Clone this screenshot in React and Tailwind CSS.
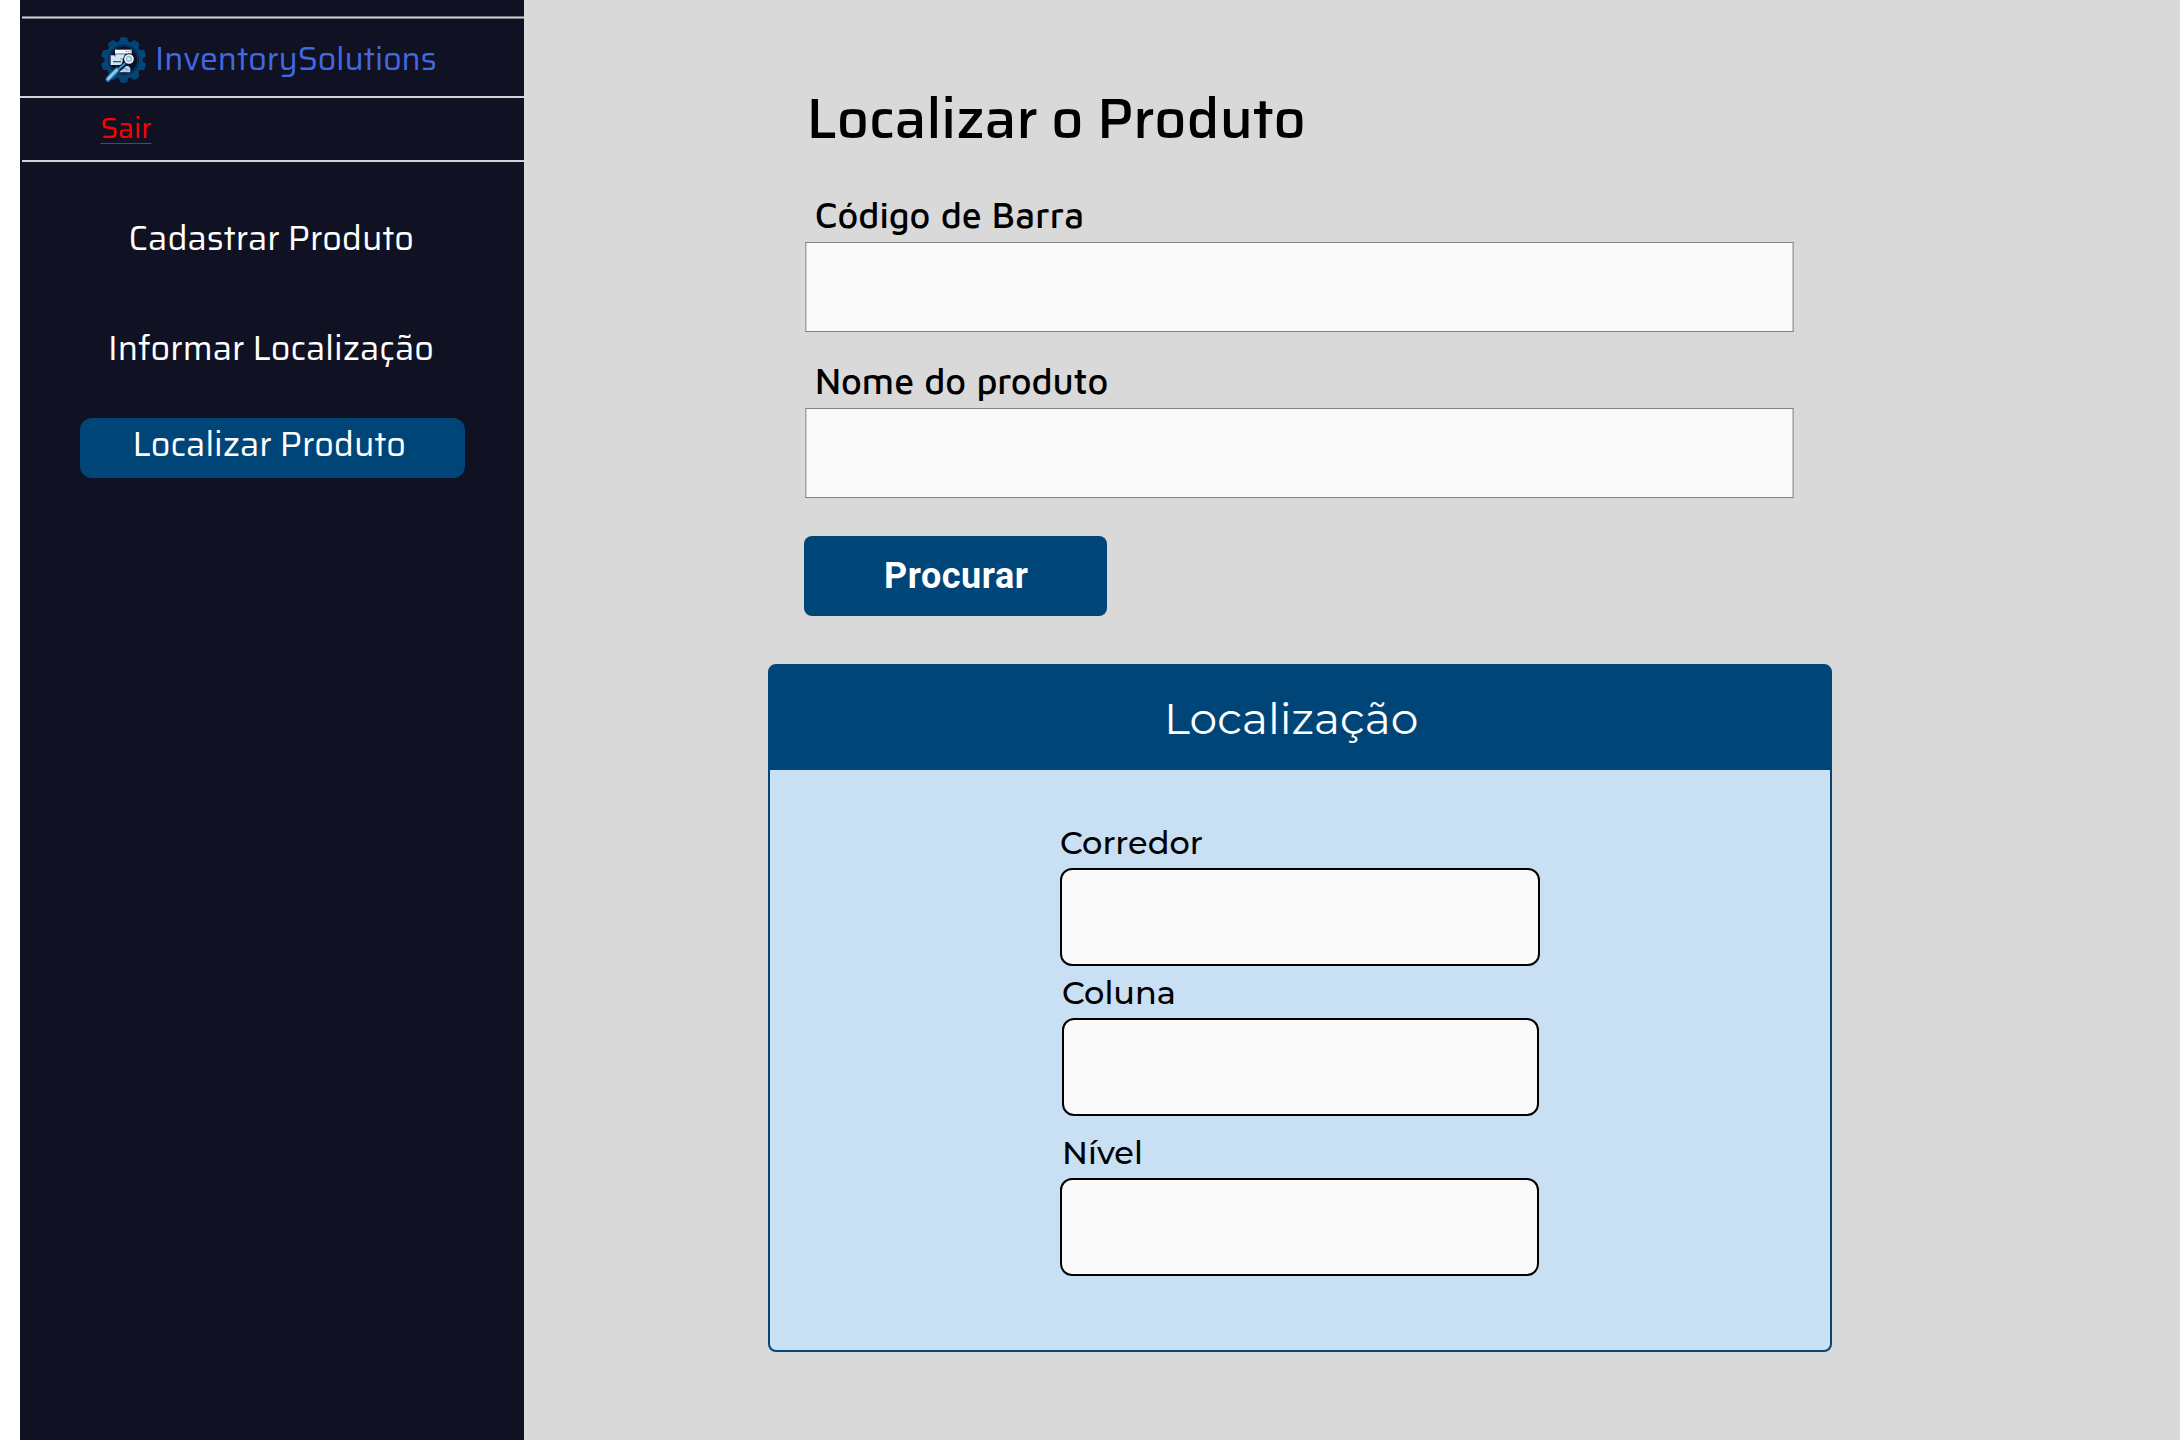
import React from "react";

const TEETH = [0, 36, 72, 108, 144, 180, 216, 252, 288, 324];

function Logo() {
  return (
    <svg viewBox="0 0 180 180" className="block h-[60px] w-[60px] shrink-0" aria-hidden="true">
      <g fill="#024678">
        {TEETH.map((a) => (
          <path key={a} d="M71 38 L75 26 Q76 22 80 22 H92 Q96 22 97 26 L101 38 Z" transform={`rotate(${a} 86 90)`} />
        ))}
        <circle cx="86" cy="90" r="57" />
      </g>
      <circle cx="86" cy="90" r="46" fill="#0b1128" />
      <circle cx="86" cy="90" r="43" fill="none" stroke="#0a4f86" strokeWidth="2.5" />
      <path d="M60 59 H110 V71 H60 Z" fill="#f4fbff" />
      <path d="M92 64 H107" stroke="#31597c" strokeWidth="2.5" strokeDasharray="3 3" />
      <path d="M61 73 H90 L86 86 H61 Z" fill="#d4e9f8" />
      <path d="M47 76 H58 L61 82 H76 V88 H84 L80 105 H47 Z" fill="#cfe6f7" />
      <path d="M54 95 H78" stroke="#2b4663" strokeWidth="3.5" />
      <path d="M84 108 H100 L106 114 V127 H72 Z" fill="#a9d3f1" />
      <path d="M78 120 L88 114 L98 120" stroke="#4c8cbd" strokeWidth="3" fill="none" />
      <path d="M92 100 L66 122" stroke="#0b1128" strokeWidth="14" />
      <path d="M91 99 L70 118" stroke="#3f8fca" strokeWidth="6" />
      <path d="M66 120 L39 148" stroke="#2b7ab5" strokeWidth="15" strokeLinecap="round" />
      <path d="M65 120 L39 147" stroke="#8fc8f0" strokeWidth="8" strokeLinecap="round" />
      <circle cx="102" cy="87" r="17" fill="#0b1128" />
      <circle cx="102" cy="87" r="12" fill="#8fbfe0" stroke="#eef8ff" strokeWidth="5" />
      <path d="M97 83 H106 V91 H97 Z" fill="#d9edf9" />
    </svg>
  );
}

function SearchField({ label }) {
  return (
    <label className="block">
      <span className="block h-[46px] pt-px pl-[10px] font-['Maven_Pro','Noto_Sans',sans-serif] text-4xl leading-[36px] font-medium">
        {label}
      </span>
      <input className="block h-[90px] w-[989px] border border-x-[#a4a4a4] border-y-[#848484] bg-[#fafafa] px-6 text-3xl shadow-[inset_1px_0_#d0d0d0,inset_-1px_0_#c4c4c4] outline-none" />
    </label>
  );
}

function LocationField({ label, labelClass, inputClass }) {
  return (
    <label className="block">
      <span className={`block h-[46px] pt-px text-[32px] leading-[40px] font-medium ${labelClass}`}>{label}</span>
      <input className={`block h-[98px] rounded-xl border-2 border-black bg-[#fafafa] px-6 text-3xl outline-none ${inputClass}`} />
    </label>
  );
}

function Sidebar() {
  return (
    <aside className="ml-5 flex w-[504px] shrink-0 flex-col bg-[#101122] pt-4 font-['Saira','Roboto',sans-serif] text-white">
      <div className="ml-0.5 h-[3px] border-y border-[#77777f] bg-[#d4d4d8]" />
      <div className="flex h-[77px] items-start pl-[75px]">
        <div className="mt-[11px]">
          <Logo />
        </div>
        <span className="mt-4 text-[32px] leading-[48px] whitespace-nowrap text-[#4169e1]">InventorySolutions</span>
      </div>
      <div className="h-0.5 bg-[#d4d4d8]" />
      <div className="h-[62px] pt-[10px] pl-[80.5px]">
        <a href="#" className="block w-fit text-[28px] leading-[40px] text-[#ff0000] underline decoration-1 underline-offset-[5px] [text-decoration-skip-ink:none]">
          Sair
        </a>
      </div>
      <div className="ml-0.5 h-0.5 bg-[#d4d4d8]" />
      <nav className="flex flex-col pt-14 text-[34px] leading-[40px] whitespace-nowrap">
        <a href="#" className="pl-[108.5px]">Cadastrar Produto</a>
        <a href="#" className="mt-[70px] pl-[88px]">Informar Localização</a>
        <a href="#" className="mt-[50px] ml-[60px] h-[60px] w-[385px] rounded-xl bg-[#004578] pt-[6px] pl-[52.5px]">Localizar Produto</a>
      </nav>
    </aside>
  );
}

export default function App() {
  return (
    <div className="flex h-[1440px] w-[2180px] overflow-hidden bg-white text-black">
      <Sidebar />
      <main className="flex-1 bg-[#d9d9d9] pt-[79px]">
        <section className="pl-[281px]">
          <h1 className="pl-[1.5px] font-['Saira','Roboto',sans-serif] text-[56px] leading-[79px] font-medium">Localizar o Produto</h1>
          <div className="mt-[38px] flex flex-col gap-[30px]">
            <SearchField label="Código de Barra" />
            <SearchField label="Nome do produto" />
          </div>
          <button className="mt-[38px] -ml-[1px] block h-20 w-[303px] rounded-lg bg-[#004578] pl-[80px] text-left font-['Roboto',sans-serif] text-4xl leading-[80px] font-bold tracking-[0.55px] text-white">
            Procurar
          </button>
        </section>
        <section className="mt-12 ml-[244px] h-[688px] w-[1064px] rounded-lg border-2 border-[#004578] bg-[#c8dff4] font-['Montserrat','Inter',sans-serif]">
          <h2 className="h-[104px] rounded-t-[5px] bg-[#004578] pt-6 pl-[394px] text-[44px] leading-[56px] font-normal text-white">Localização</h2>
          <div className="flex flex-col pt-[52px] pl-[290px]">
            <LocationField label="Corredor" labelClass="" inputClass="w-[480px]" />
            <div className="mt-[6px]">
              <LocationField label="Coluna" labelClass="pl-[2px]" inputClass="ml-[2px] w-[477px]" />
            </div>
            <div className="mt-4">
              <LocationField label="Nível" labelClass="pl-[2px]" inputClass="w-[478.5px]" />
            </div>
          </div>
        </section>
      </main>
    </div>
  );
}
